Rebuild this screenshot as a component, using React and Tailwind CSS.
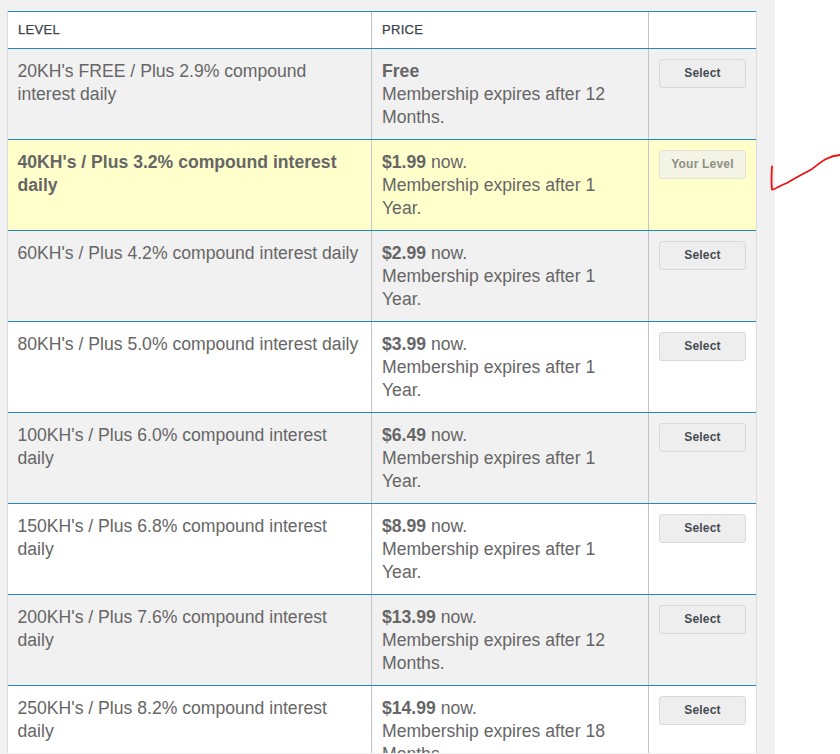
const rows = [
  { level: "20KH's FREE / Plus 2.9% compound interest daily", price: "Free", now: false, term: "12 Months.", bg: "bg-[#f1f1f1]" },
  { level: "40KH's / Plus 3.2% compound interest daily", price: "$1.99", now: true, term: "1 Year.", bg: "bg-[#ffffcc]", current: true },
  { level: "60KH's / Plus 4.2% compound interest daily", price: "$2.99", now: true, term: "1 Year.", bg: "bg-[#f1f1f1]" },
  { level: "80KH's / Plus 5.0% compound interest daily", price: "$3.99", now: true, term: "1 Year.", bg: "bg-white" },
  { level: "100KH's / Plus 6.0% compound interest daily", price: "$6.49", now: true, term: "1 Year.", bg: "bg-[#f1f1f1]" },
  { level: "150KH's / Plus 6.8% compound interest daily", price: "$8.99", now: true, term: "1 Year.", bg: "bg-white" },
  { level: "200KH's / Plus 7.6% compound interest daily", price: "$13.99", now: true, term: "12 Months.", bg: "bg-[#f1f1f1]" },
  { level: "250KH's / Plus 8.2% compound interest daily", price: "$14.99", now: true, term: "18 Months.", bg: "bg-white" },
];

function Row({ row }) {
  return (
    <div className={`flex h-[91px] shrink-0 border-t border-[#2188c0] ${row.bg}`}>
      <div className={`w-[363px] shrink-0 pl-[9.5px] pr-2 pt-[11px] ${row.current ? "font-bold" : ""}`}>{row.level}</div>
      <div className="w-[277px] shrink-0 border-l border-[#c4c4c4] pl-[10px] pr-8 pt-[11px]">
        <b>{row.price}</b>{row.now ? " now." : ""}
        <br />
        Membership expires after {row.term}
      </div>
      <div className="flex-1 border-l border-[#c4c4c4] pl-[10px] pt-[10px]">
        {row.current ? (
          <button className="h-[29px] w-[87px] rounded-[3px] border border-[#e4e4d6] bg-[#f3f3e6] text-[12px] font-bold tracking-[0.2px] text-[#8f8f85]">
            Your Level
          </button>
        ) : (
          <button className="h-[29px] w-[87px] rounded-[3px] border border-[#d9d9d9] bg-[#eeeeee] text-[12px] font-bold tracking-[0.2px] text-[#444b52]">
            Select
          </button>
        )}
      </div>
    </div>
  );
}

export default function App() {
  return (
    <div className="relative h-[754px] overflow-hidden bg-white font-['Liberation_Sans',Arial,sans-serif] text-[17.6px] leading-[23px] text-[#666666]">
      <div className="h-[754px] w-[775px] bg-[#f1f1f1] pl-[7px] pt-[11px]">
        <div className="flex h-[742px] w-[750px] flex-col overflow-hidden border-x border-[#dddddd] bg-white">
          <div className="flex h-[37px] shrink-0 border-t border-[#2188c0] text-[13px] tracking-[0.3px] text-[#3a4149] [-webkit-text-stroke:0.25px]">
            <div className="w-[363px] shrink-0 pl-[10px] pt-[6px]">LEVEL</div>
            <div className="w-[277px] shrink-0 border-l border-[#c4c4c4] pl-[10px] pt-[6px]">PRICE</div>
            <div className="flex-1 border-l border-[#c4c4c4]" />
          </div>
          {rows.map((row) => (
            <Row key={row.level} row={row} />
          ))}
        </div>
      </div>
      <svg className="absolute left-[765px] top-[150px]" width="75" height="45" viewBox="0 0 75 45" fill="none">
        <path d="M7 16.5 C6.5 24 6 30 7 39.5 C8 40.5 14 36 22 33 C30 28 38 24 47 19 C55 13 62 6 75 5" stroke="#f01010" strokeWidth="1.8" strokeLinecap="round" strokeLinejoin="round" />
      </svg>
    </div>
  );
}
